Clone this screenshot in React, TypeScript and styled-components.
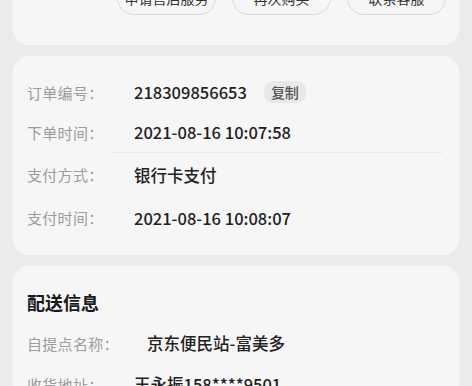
import React from "react";
import styled, { createGlobalStyle } from "styled-components";

const Global = createGlobalStyle`
  html, body { margin: 0; padding: 0; background: #ebebeb; }
  body { font-family: "Noto Sans CJK SC", "Noto Sans", sans-serif; overflow: hidden; }
`;

const Page = styled.div`
  display: flex;
  flex-direction: column;
  gap: 11px;
  padding: 0 13px;
  margin-top: -40px;
`;

const Card = styled.div<{ $pt?: number; $pb?: number }>`
  background: #f6f6f6;
  border-radius: 16px;
  padding: ${(p) => p.$pt ?? 16}px 0 ${(p) => p.$pb ?? 16}px 0;
  display: flex;
  flex-direction: column;
`;

const Actions = styled.div`
  display: flex;
  justify-content: flex-end;
  gap: 16px;
  padding: 0 13px 0 0;
`;

const Pill = styled.button`
  width: 99px;
  height: 34px;
  border: 1px solid #dadada;
  border-radius: 17px;
  background: transparent;
  font-family: inherit;
  font-size: 14px;
  color: #333;
  display: flex;
  align-items: center;
  justify-content: center;
  padding: 0;
`;

const Row = styled.div<{ $h: number; $vx?: number }>`
  display: flex;
  align-items: center;
  height: ${(p) => p.$h}px;
  padding-left: 14px;
`;

const Label = styled.span<{ $w?: number }>`
  width: ${(p) => p.$w ?? 107}px;
  flex: none;
  font-size: 15px;
  color: #9c9c9c;
  letter-spacing: 0.3px;
`;

const Value = styled.span`
  font-size: 16.5px;
  color: #222;
  font-weight: 500;
`;

const CopyTag = styled.span`
  margin-left: 17px;
  background: #e8e8e8;
  color: #555;
  font-size: 14px;
  font-weight: 500;
  border-radius: 9px;
  padding: 0 7px;
  height: 22px;
  line-height: 22px;
`;

const Divider = styled.div`
  height: 1px;
  background: #ebebeb;
  margin: 0 16px 0 97px;
`;

const Title = styled.div`
  font-size: 18px;
  font-weight: 700;
  color: #1a1a1a;
  padding-left: 14px;
  height: 36px;
  display: flex;
  align-items: center;
`;

export default function App() {
  return (
    <>
      <Global />
      <Page>
        <Card $pt={21} $pb={30}>
          <Actions>
            <Pill>申请售后服务</Pill>
            <Pill>再次购买</Pill>
            <Pill>联系客服</Pill>
          </Actions>
        </Card>
        <Card $pt={16} $pb={16}>
          <Row $h={40}>
            <Label>订单编号：</Label>
            <Value>218309856653</Value>
            <CopyTag>复制</CopyTag>
          </Row>
          <Row $h={40}>
            <Label>下单时间：</Label>
            <Value>2021-08-16 10:07:58</Value>
          </Row>
          <Divider />
          <Row $h={43}>
            <Label>支付方式：</Label>
            <Value>银行卡支付</Value>
          </Row>
          <Row $h={43}>
            <Label>支付时间：</Label>
            <Value>2021-08-16 10:08:07</Value>
          </Row>
        </Card>
        <Card $pt={18} $pb={40}>
          <Title>配送信息</Title>
          <Row $h={42} style={{ marginTop: 2 }}>
            <Label $w={120}>自提点名称：</Label>
            <Value>京东便民站-富美多</Value>
          </Row>
          <Row $h={40}>
            <Label>收货地址：</Label>
            <Value>王永振158****9501</Value>
          </Row>
        </Card>
      </Page>
    </>
  );
}
